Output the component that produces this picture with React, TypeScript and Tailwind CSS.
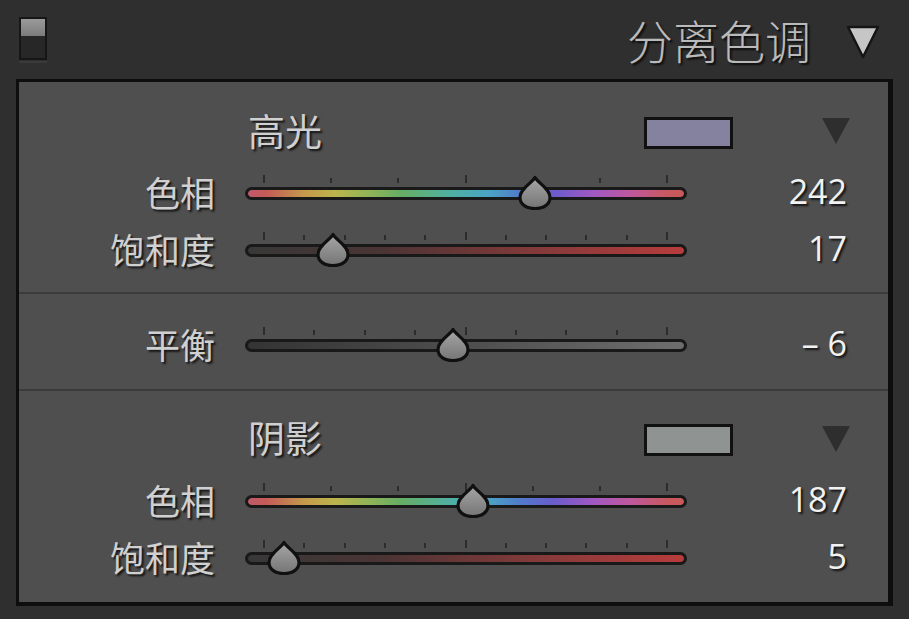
import React from 'react';

const CJK = "font-['Noto_Sans_CJK_SC','Noto_Sans',sans-serif]";
const NUM = "font-['Open_Sans','Liberation_Sans',sans-serif]";
const SHADOW = '[text-shadow:2px_2px_2px_rgba(0,0,0,0.75)]';

const HUE_TRACK =
  'bg-[linear-gradient(to_right,#c05a6c_0%,#c45a58_4%,#c49a4c_13%,#bdb44c_20%,#8eb458_28%,#66ae64_35%,#4eb0a4_47%,#4aa4c4_55%,#5278cc_63%,#6a5ccc_70%,#a058c4_79%,#c0589c_88%,#c85860_96%,#c85858_100%)]';
const SAT_TRACK = 'bg-[linear-gradient(to_right,#383838_0%,#4a3434_30%,#8a3a3a_70%,#b83c3c_100%)]';
const BAL_TRACK = 'bg-[linear-gradient(to_right,#343434_0%,#4e4e4e_50%,#6e6e6e_100%)]';

type Kind = 'hue' | 'sat' | 'bal';

// tick count per slider type, range runs from first to last tick
const TICKS: Record<Kind, number> = { hue: 7, sat: 11, bal: 9 };
const RANGE_LEFT = 19;
const RANGE_WIDTH = 403;

function Thumb({ frac }: { frac: number }) {
  const x = RANGE_LEFT + frac * RANGE_WIDTH - 18;
  return (
    <svg width="36" height="36" viewBox="0 0 36 36" className="absolute top-[5px]" style={{ left: x }}>
      <defs>
        <linearGradient id="thumbFill" x1="0" y1="0" x2="0" y2="1">
          <stop offset="0" stopColor="#a6a6a6" />
          <stop offset="1" stopColor="#757575" />
        </linearGradient>
      </defs>
      <path
        d="M18 2.5 C21 8 33 13.5 33 22.5 C33 29.5 26.5 33.5 18 33.5 C9.5 33.5 3 29.5 3 22.5 C3 13.5 15 8 18 2.5 Z"
        fill="url(#thumbFill)"
        stroke="#101010"
        strokeWidth="3.2"
        strokeLinejoin="round"
      />
    </svg>
  );
}

function Slider({ kind, frac }: { kind: Kind; frac: number }) {
  const n = TICKS[kind];
  const track = kind === 'hue' ? HUE_TRACK : kind === 'sat' ? SAT_TRACK : BAL_TRACK;
  return (
    <div className="relative w-[442px] h-[40px]">
      {Array.from({ length: n }).map((_, i) => {
        const tall = i === 0 || i === n - 1 || i === (n - 1) / 2;
        return (
          <div
            key={i}
            className={`absolute w-[2px] bg-[#2c2c2c] ${tall ? 'top-[5px] h-[8px]' : 'top-[8px] h-[5px]'}`}
            style={{ left: RANGE_LEFT + (i * RANGE_WIDTH) / (n - 1) - 1 }}
          />
        );
      })}
      <div className="absolute left-0 right-0 top-[17px] h-[13px] rounded-full border-[3px] border-[#191919] bg-[#191919] overflow-hidden">
        <div className={`w-full h-full rounded-full ${track}`} />
      </div>
      <Thumb frac={frac} />
    </div>
  );
}

function Row({ label, kind, frac, value }: { label: string; kind: Kind; frac: number; value: string }) {
  return (
    <div className="flex items-center h-[40px]">
      <div className={`w-[196px] text-right text-[35px] leading-none text-[#d0d0d0] ${CJK} ${SHADOW} pt-[3px]`}>{label}</div>
      <div className="w-[30px]" />
      <Slider kind={kind} frac={frac} />
      <div className={`flex-1 text-right pr-[41px] text-[34px] leading-none text-[#f2f2f2] ${NUM} ${SHADOW} pt-[2px]`}>
        {value}
      </div>
    </div>
  );
}

function Header({ title, swatch, h, pt }: { title: string; swatch: string; h: string; pt: string }) {
  return (
    <div className={`flex items-center ${h} ${pt} pl-[229px] pr-[37px]`}>
      <div className={`text-[37px] leading-none text-[#d0d0d0] ${CJK} ${SHADOW}`}>{title}</div>
      <div className={`ml-auto w-[89px] h-[32px] border-[3px] border-[#111] mt-[5px] ${swatch}`} />
      <svg width="30" height="28" viewBox="0 0 30 28" className="ml-[88px] mt-[2px]">
        <path d="M1 1 H29 L15 27 Z" fill="#2e2e2e" />
      </svg>
    </div>
  );
}

function Divider() {
  return <div className="h-[2px] bg-[#3b3b3b]" />;
}

export default function App() {
  return (
    <div className="w-[909px] h-[619px] bg-[#2f2f2f] overflow-hidden">
      {/* top bar */}
      <div className="flex items-center h-[79px] pl-[19px] pr-[29px]">
        <div className="flex flex-col">
          <div className="w-[28px] h-[43px] border-2 border-[#161616] bg-[#272727] flex flex-col">
            <div className="h-[17px] bg-[linear-gradient(to_bottom,#9a9a9a,#7c7c7c)]" />
          </div>
          <div className="h-[2px] mt-[1px] bg-[#3a3a3a]" />
        </div>
        <div className={`ml-auto text-[46px] leading-none font-light text-[#bababa] ${CJK} ${SHADOW} pb-[1px]`}>
          分离色调
        </div>
        <svg width="34" height="34" viewBox="0 0 34 34" className="ml-[35px] mt-[4px]">
          <path d="M2 2 H32 L17 32 Z" fill="#c6c6c6" stroke="#151515" strokeWidth="2.5" strokeLinejoin="round" />
        </svg>
      </div>

      {/* panel */}
      <div className="ml-[16px] w-[877px] h-[527px] border-[3px] border-r-[5px] border-b-[4px] border-[#0e0e0e] bg-[#4f4f4f] flex flex-col">
        <div className="h-[210px]">
          <Header title="高光" swatch="bg-[#84829e]" h="h-[88px]" pt="pt-[8px]" />
          <Row label="色相" kind="hue" frac={242 / 360} value="242" />
          <div className="h-[17px]" />
          <Row label="饱和度" kind="sat" frac={17 / 100} value="17" />
        </div>
        <Divider />
        <div className="h-[95px] pt-[28px]">
          <Row label="平衡" kind="bal" frac={(100 - 6) / 200} value="– 6" />
        </div>
        <Divider />
        <div className="flex-1">
          <Header title="阴影" swatch="bg-[#8f9492]" h="h-[87px]" pt="pt-[6px]" />
          <Row label="色相" kind="hue" frac={187 / 360} value="187" />
          <div className="h-[17px]" />
          <Row label="饱和度" kind="sat" frac={5 / 100} value="5" />
        </div>
      </div>
    </div>
  );
}
